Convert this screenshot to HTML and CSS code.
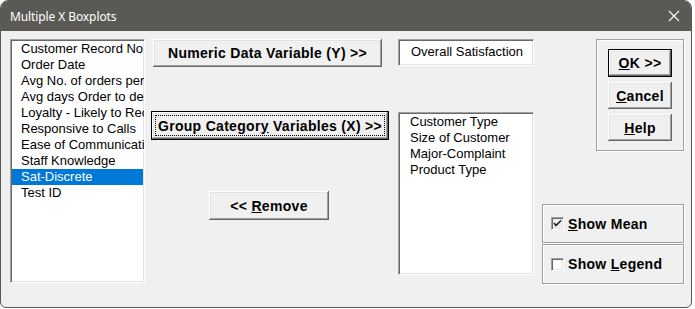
FILE: index.html
```html
<!DOCTYPE html>
<html lang="en">
<head>
    <meta charset="UTF-8">
    <title>Multiple X Boxplots</title>
    <link rel="stylesheet" href="styles.css">
</head>
<body>
    <div class="window">
        <div class="titlebar">
            <span class="title">Multiple X Boxplots</span>
            <svg class="close" width="12" height="12" viewBox="0 0 12 12">
                <path d="M1 1 L11 11 M11 1 L1 11" stroke="#fff" stroke-width="1.1" fill="none"/>
            </svg>
        </div>

        <div class="client">
            <div class="col col-source">
                <ul class="listbox source-list">
                    <li>Customer Record No.</li>
                    <li>Order Date</li>
                    <li>Avg No. of orders per month</li>
                    <li>Avg days Order to delivery</li>
                    <li>Loyalty - Likely to Recommend</li>
                    <li>Responsive to Calls</li>
                    <li>Ease of Communications</li>
                    <li>Staff Knowledge</li>
                    <li class="selected">Sat-Discrete</li>
                    <li>Test ID</li>
                </ul>
            </div>

            <div class="col col-actions">
                <button class="btn btn-numeric">Numeric Data Variable (Y) &gt;&gt;</button>
                <button class="btn btn-group default">Group Categor<u>y</u> Variables (X) &gt;&gt;</button>
                <button class="btn btn-remove">&lt;&lt; <u>R</u>emove</button>
            </div>

            <div class="col col-targets">
                <div class="field">Overall Satisfaction</div>
                <ul class="listbox target-list">
                    <li>Customer Type</li>
                    <li>Size of Customer</li>
                    <li>Major-Complaint</li>
                    <li>Product Type</li>
                </ul>
            </div>

            <div class="col col-options">
                <div class="frame frame-buttons">
                    <button class="btn btn-ok default"><u>O</u>K &gt;&gt;</button>
                    <button class="btn btn-side"><u>C</u>ancel</button>
                    <button class="btn btn-side"><u>H</u>elp</button>
                </div>
                <label class="frame frame-check mean">
                    <span class="checkbox checked">
                        <svg width="9" height="9" viewBox="0 0 9 9"><path d="M1 4 L3 6.5 L8 1.5" stroke="#222" stroke-width="1.6" fill="none"/></svg>
                    </span>
                    <span><u>S</u>how Mean</span>
                </label>
                <label class="frame frame-check legend">
                    <span class="checkbox"></span>
                    <span>Show <u>L</u>egend</span>
                </label>
            </div>
        </div>
    </div>
</body>
</html>
```

FILE: styles.css
```css
body {
    margin: 0;
    background: #ffffff;
    font-family: 'Liberation Sans', Arial, sans-serif;
}
.window {
    width: 692px;
    height: 308px;
    box-sizing: border-box;
    border: 1px solid #5b5956;
    border-radius: 8px 8px 6px 6px;
    background: #f0f0f0;
    overflow: hidden;
}
.titlebar {
    height: 30px;
    background: #5b5956;
    display: flex;
    align-items: center;
    padding: 0 9px 0 9px;
}
.title {
    flex: 1;
    color: #fff;
    font-family: 'Noto Sans', sans-serif;
    font-size: 12px;
    letter-spacing: -0.1px;
}
.close {
    margin-right: 2px;
}
.client {
    display: flex;
    padding: 8px 0 0 9px;
}
.col {
    display: flex;
    flex-direction: column;
    align-items: flex-start;
}
.col-source { width: 135px; }
.col-actions { width: 240px; margin-left: 5px; }
.col-targets { width: 136px; margin-left: 8px; }
.col-options { width: 142px; margin-left: 8px; }

/* sunken list boxes */
.listbox {
    margin: 0;
    list-style: none;
    background: #fff;
    box-sizing: border-box;
    border-style: solid;
    border-width: 1px;
    border-color: #a0a0a0 #ffffff #ffffff #a0a0a0;
    box-shadow: inset 1px 1px #696969, inset -1px -1px #e3e3e3;
    overflow: hidden;
    font-size: 13px;
    color: #000;
}
.listbox li {
    height: 16px;
    line-height: 16px;
    white-space: nowrap;
}
.source-list {
    width: 135px;
    height: 244px;
    padding: 1px 1px;
}
.source-list li { padding-left: 9px; }
.source-list li.selected {
    background: #0078d7;
    color: #fff;
}
.target-list {
    width: 136px;
    height: 163px;
    margin-top: 46px;
    padding: 1px 0 0 11px;
}
.field {
    width: 136px;
    height: 27px;
    box-sizing: border-box;
    background: #fff;
    border-style: solid;
    border-width: 1px;
    border-color: #a0a0a0 #ffffff #ffffff #a0a0a0;
    box-shadow: inset 1px 1px #696969, inset -1px -1px #e3e3e3;
    font-size: 13px;
    line-height: 23px;
    padding-left: 12px;
}

/* raised buttons */
.btn {
    font-family: 'Liberation Sans', Arial, sans-serif;
    font-weight: bold;
    font-size: 14px;
    letter-spacing: 0.3px;
    color: #000;
    background: #f0f0f0;
    border: none;
    padding: 0;
    box-sizing: border-box;
    box-shadow: inset -1px -1px #696969, inset 1px 1px #ffffff, inset -2px -2px #a0a0a0, inset 2px 2px #e3e3e3;
}
.btn.default {
    border: 1px solid #000;
}
.btn-numeric {
    width: 229px;
    height: 28px;
    margin-left: 3px;
}
.btn-group {
    width: 238px;
    height: 29px;
    margin-left: 1px;
    margin-top: 44px;
    outline: 1px dotted #000;
    outline-offset: -5px;
}
.btn-remove {
    width: 120px;
    height: 29px;
    margin-left: 59px;
    margin-top: 51px;
}

/* etched frames */
.frame {
    box-sizing: border-box;
    border: 1px solid #a0a0a0;
    box-shadow: inset 1px 1px #fff, 1px 1px #fff;
}
.frame-buttons {
    width: 88px;
    height: 112px;
    margin-left: 54px;
    display: flex;
    flex-direction: column;
    align-items: center;
    padding-top: 9px;
    gap: 5px;
}
.btn-ok {
    width: 64px;
    height: 28px;
}
.btn-side {
    width: 64px;
    height: 27px;
}
.frame-check {
    width: 142px;
    display: flex;
    align-items: center;
    font-weight: bold;
    font-size: 14px;
    letter-spacing: 0.3px;
    padding-left: 8px;
}
.frame-check.mean {
    height: 39px;
    margin-top: 53px;
}
.frame-check.legend {
    height: 40px;
    margin-top: 1px;
}
.checkbox {
    width: 13px;
    height: 13px;
    box-sizing: border-box;
    border-style: solid;
    border-width: 1px;
    border-color: #a0a0a0 #ffffff #ffffff #a0a0a0;
    box-shadow: inset 1px 1px #696969, inset -1px -1px #e3e3e3;
    background: #fff;
    margin-right: 4px;
    display: flex;
    align-items: center;
    justify-content: center;
}
.checkbox.checked {
    background: #f0f0f0;
}
```
